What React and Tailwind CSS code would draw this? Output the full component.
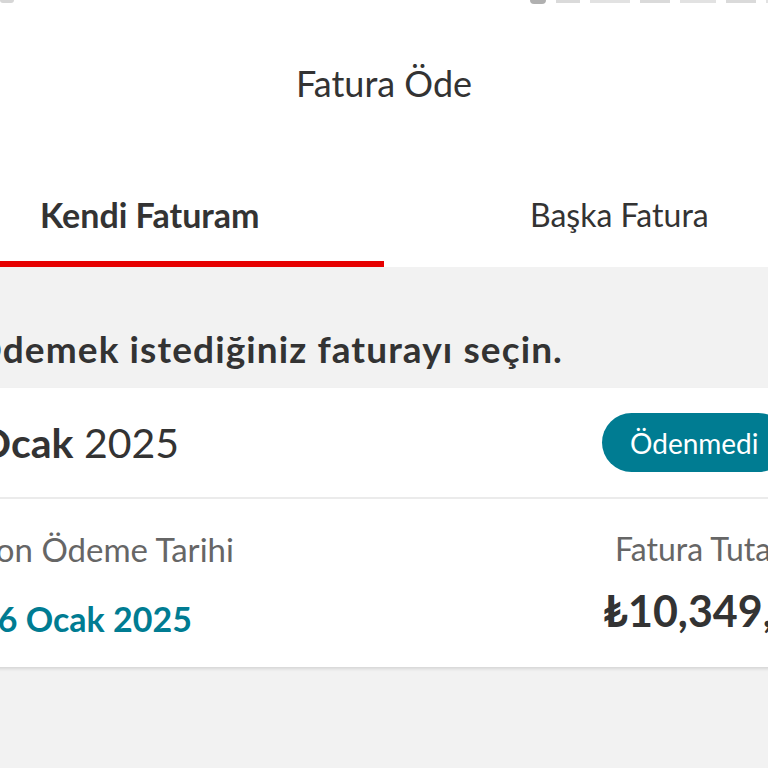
export default function App() {
  return (
    <div
      className="w-[768px] h-[768px] overflow-hidden bg-[#f2f2f2] text-[#333333]"
      style={{ fontFamily: "Lato, 'Noto Sans', sans-serif" }}
    >
      {/* header */}
      <div className="bg-white">
        <div className="relative h-[166px] flex items-center justify-center">
          {/* clipped status bar remnants */}
          <div className="absolute top-0 left-0 w-[14px] h-[3px] bg-[#d6d6d6] rounded-b" />
          <div className="absolute top-0 left-[530px] flex items-start gap-[10px]">
            <div className="w-[16px] h-[4px] bg-[#b0b0b0] rounded-b-full" />
            <div className="w-[24px] h-[3px] bg-[#dadada]" />
            <div className="w-[40px] h-[3px] bg-[#e2e2e2]" />
            <div className="w-[30px] h-[3px] bg-[#dadada]" />
            <div className="w-[36px] h-[3px] bg-[#e2e2e2]" />
            <div className="w-[30px] h-[3px] bg-[#dadada]" />
            <div className="w-[18px] h-[3px] bg-[#e2e2e2]" />
          </div>
          <h1 className="text-[36px] leading-none font-normal text-[#333333]">Fatura Öde</h1>
        </div>
        <div className="flex h-[101px]">
          <div className="w-[384px] flex flex-col">
            <div className="flex-1 flex items-center pl-[40px] pt-[2px]">
              <span className="text-[34px] font-bold leading-none">Kendi Faturam</span>
            </div>
            <div className="h-[6px] bg-[#e60000]" />
          </div>
          <div className="flex-1 flex flex-col">
            <div className="flex-1 flex items-center pl-[146px] pt-[2px]">
              <span className="text-[32px] font-normal leading-none">Başka Fatura</span>
            </div>
            <div className="h-[6px]" />
          </div>
        </div>
      </div>

      {/* body */}
      <div className="-ml-[22px] w-[840px]">
        <div className="pt-[62px] pb-[19px]">
          <p className="h-[40px] leading-[40px] text-[37px] tracking-[1.1px] font-bold -ml-[6px]">
            Ödemek istediğiniz faturayı seçin.
          </p>
        </div>

        <div className="bg-white shadow-[0_2px_3px_rgba(0,0,0,0.12)]">
          <div className="h-[109px] flex items-center justify-between pr-[30px]">
            <div className="text-[41px] leading-none">
              <span className="font-bold">Ocak</span> <span className="font-normal">2025</span>
            </div>
            <div className="h-[59px] w-[186px] pl-[28px] rounded-full bg-[#007c92] flex items-center">
              <span className="text-white text-[28px] leading-none">Ödenmedi</span>
            </div>
          </div>
          <div className="h-[2px] bg-[#ebebeb]" />
          <div className="flex pt-[30px] pb-[26px]">
            <div className="flex-1 flex flex-col">
              <span className="h-[40px] leading-[40px] text-[33px] text-[#666666]">Son Ödeme Tarihi</span>
              <span className="mt-[28px] h-[44px] leading-[44px] text-[34px] font-bold text-[#007c92]">
                26 Ocak 2025
              </span>
            </div>
            <div className="w-[215px] flex flex-col items-start">
              <span className="pl-[12px] h-[40px] leading-[40px] text-[32px] text-[#666666] whitespace-nowrap">
                Fatura Tutarı
              </span>
              <span className="mt-[20px] h-[44px] leading-[44px] text-[43px] font-bold whitespace-nowrap">
                ₺10,349,50
              </span>
            </div>
          </div>
        </div>
      </div>
    </div>
  );
}
